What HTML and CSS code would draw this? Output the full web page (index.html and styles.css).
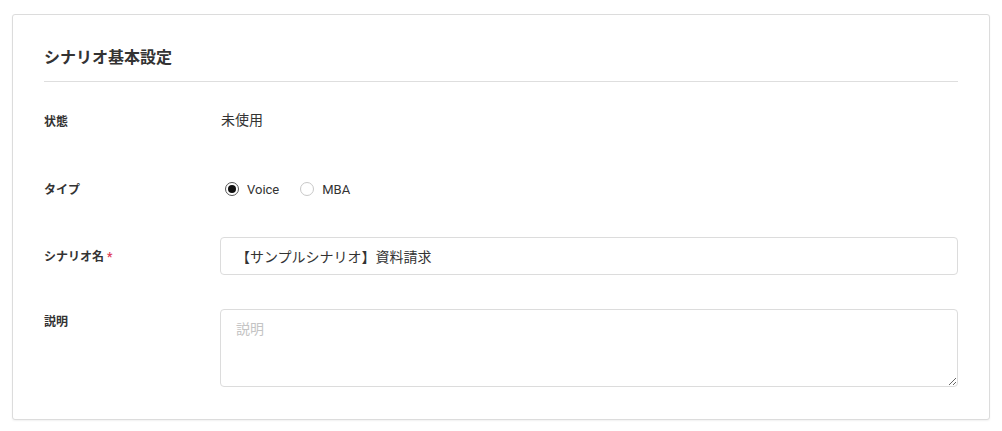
FILE: index.html
```html
<!DOCTYPE html>
<html lang="ja">
<head>
<meta charset="utf-8">
<title>シナリオ基本設定</title>
<link rel="stylesheet" href="styles.css">
</head>
<body>
<section class="card">
  <h2 class="card-title">シナリオ基本設定</h2>
  <div class="form">
    <div class="row row-status">
      <div class="label">状態</div>
      <div class="value">未使用</div>
    </div>
    <div class="row row-type">
      <div class="label">タイプ</div>
      <div class="radios">
        <label class="radio"><input type="radio" name="type" checked><span>Voice</span></label>
        <label class="radio"><input type="radio" name="type"><span>MBA</span></label>
      </div>
    </div>
    <div class="row row-name">
      <div class="label">シナリオ名<span class="req">*</span></div>
      <input class="text-input" type="text" value="【サンプルシナリオ】資料請求">
    </div>
    <div class="row row-desc">
      <div class="label">説明</div>
      <textarea class="textarea" placeholder="説明"></textarea>
    </div>
  </div>
</section>
</body>
</html>
```

FILE: styles.css
```css
* { box-sizing: border-box; }
html, body { background: #fff; }
body {
  margin: 0;
  padding: 14px 12px 11px;
  font-family: Roboto, "Noto Sans CJK JP", sans-serif;
  color: #333;
}
.card {
  border: 1px solid #dcdcdc;
  border-radius: 3px;
  box-shadow: 0 1px 2px rgba(0,0,0,0.06);
  padding: 31px 31px 32px;
  background: #fff;
}
.card-title {
  margin: 0;
  font-size: 16px;
  line-height: 24px;
  font-weight: 700;
  padding-bottom: 11px;
  border-bottom: 1px solid #dedede;
  color: #333;
}
.form { padding-top: 20px; display: flex; flex-direction: column; }
.row { display: flex; align-items: center; }
.label {
  width: 176px;
  flex: none;
  font-size: 12px;
  font-weight: 700;
  line-height: 24px;
  padding-top: 2px;
  color: #333;
}
.req { color: #e0405a; margin-left: 3px; }
.row-status { min-height: 36px; }
.row-status .label { padding-top: 4px; }
.row-type { min-height: 38px; margin-top: 32px; }
.row-name { margin-top: 29px; }
.row-desc { margin-top: 34px; align-items: flex-start; }
.row-desc .label { padding-top: 1px; }
.value { font-size: 14px; line-height: 22px; color: #333; padding-left: 1px; }
.radios { display: flex; align-items: center; gap: 16px; }
.radio { display: flex; align-items: center; font-size: 13px; color: #333; cursor: pointer; }
.radio input {
  appearance: none;
  -webkit-appearance: none;
  width: 14px; height: 14px;
  margin: 0 8px 0 5px;
  border: 1px solid #c8c8c8;
  border-radius: 50%;
  background: #fff;
  display: grid;
  place-items: center;
}
.radio input:checked { border-color: #555; }
.radio input:checked::after {
  content: "";
  width: 8px; height: 8px;
  border-radius: 50%;
  background: #111;
}
.text-input, .textarea {
  flex: 1;
  min-width: 0;
  border: 1px solid #dcdcdc;
  border-radius: 4px;
  font-family: Roboto, "Noto Sans CJK JP", sans-serif;
  font-size: 14px;
  color: #333;
  background: #fff;
  outline: none;
}
.text-input { height: 38px; padding: 0 15px; }
.textarea { height: 78px; padding: 9px 15px; line-height: 20px; resize: vertical; }
.textarea::placeholder { color: #c4c4c4; }
```
